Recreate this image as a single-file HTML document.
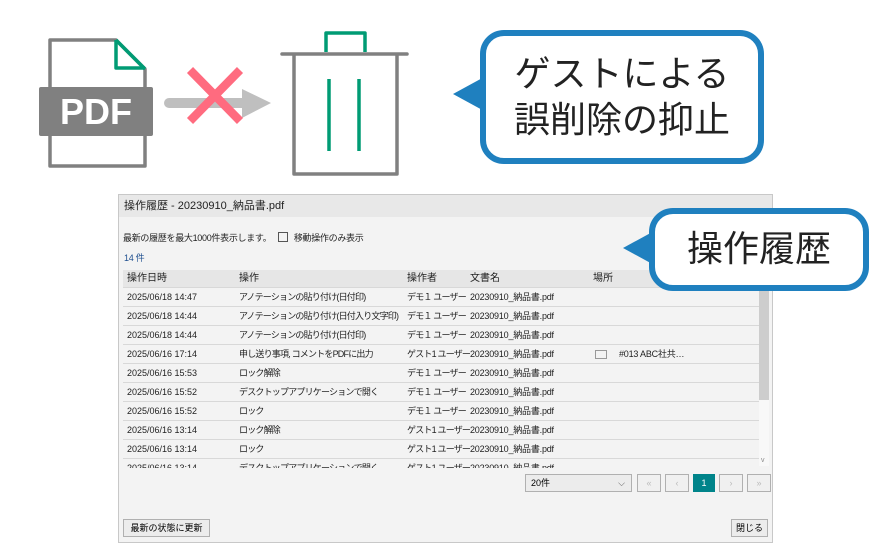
<!DOCTYPE html>
<html><head><meta charset="utf-8"><style>
body{margin:0;width:891px;height:560px;background:#fff;position:relative;overflow:hidden;font-family:"Liberation Sans","Noto Sans CJK JP",sans-serif}
.abs{position:absolute}
.dlg{left:118px;top:194px;width:655px;height:349px;border:1px solid #c8c8c8;background:#f3f3f3;box-sizing:border-box}
.tb{left:0;top:0;width:653px;height:22px;background:#e8e8e8;font-size:11px;color:#222;line-height:22px;padding-left:5px;box-sizing:border-box}
.s{font-size:9px;color:#222;letter-spacing:-0.3px}
.row{left:4px;width:636px;height:19px;border-bottom:1px solid #d8d8d8;font-size:9px;color:#222;line-height:19px;box-sizing:border-box;white-space:nowrap}
.row span{position:absolute}
.row .j{letter-spacing:-0.8px}
.row .f{letter-spacing:-0.2px}
.btn{border:1px solid #b0b0b0;background:#ececec;font-size:9px;line-height:16px;text-align:center;box-sizing:border-box;height:18px}
.callout{border:6px solid #1f80bf;border-radius:24px;background:#fff;box-sizing:border-box;color:#222;font-family:"Liberation Sans","Noto Sans CJK JP",sans-serif;font-weight:400;text-align:center}
</style></head><body>
<svg class="abs" style="left:0;top:0" width="460" height="190">
<path d="M50 40 H116 L145 69 V166 H50 Z" fill="none" stroke="#808080" stroke-width="3.5" stroke-linejoin="round"/>
<path d="M116 40 V68 H145" fill="none" stroke="#009b74" stroke-width="3.5" stroke-linejoin="round"/>
<path d="M116 40 L145 69" stroke="#009b74" stroke-width="3.5"/>
<rect x="39" y="87" width="114" height="49" rx="2" fill="#808080"/>
<text x="96" y="124" font-family="Liberation Sans" font-weight="bold" font-size="36" fill="#fff" text-anchor="middle">PDF</text>
<line x1="169" y1="103" x2="244" y2="103" stroke="#bfbfbf" stroke-width="10" stroke-linecap="round"/>
<path d="M242 89 L271 103 L242 118 Z" fill="#bfbfbf"/>
<path d="M190 70 L240 121 M240 70 L190 121" stroke="#ff6b7f" stroke-width="8.5"/>
<path d="M326 52 V33 H365 V52" fill="none" stroke="#009b74" stroke-width="3.5" stroke-linejoin="round"/>
<line x1="282" y1="54" x2="407" y2="54" stroke="#808080" stroke-width="3.5" stroke-linecap="round"/>
<path d="M294 54 V174 H397 V54" fill="none" stroke="#808080" stroke-width="3.5" stroke-linejoin="round"/>
<line x1="329" y1="79" x2="329" y2="151" stroke="#009b74" stroke-width="3.5"/>
<line x1="359" y1="79" x2="359" y2="151" stroke="#009b74" stroke-width="3.5"/>
</svg>

<div class="abs dlg">
<div class="abs tb">操作履歴 - 20230910_納品書.pdf</div>
<div class="abs s" style="left:4px;top:36px">最新の履歴を最大1000件表示します。 <span style="display:inline-block;width:8px;height:8px;border:1px solid #555;vertical-align:-1px;margin:0 4px"></span> 移動操作のみ表示</div>
<div class="abs s" style="left:5px;top:56px;color:#1f4f8f">14 件</div>
<div class="abs row" style="top:75px;height:18px;background:#e6e6e6;font-size:10px;line-height:18px"><span style="left:4px">操作日時</span><span style="left:116px">操作</span><span style="left:284px">操作者</span><span style="left:347px">文書名</span><span style="left:470px">場所</span></div>
<div class="abs" style="left:640px;top:93px;width:10px;height:178px;background:#f8f8f8"></div>
<div class="abs" style="left:640px;top:93px;width:10px;height:112px;background:#cdcdcd"></div>
<div class="abs s" style="left:642px;top:262px;color:#888;font-size:7px">v</div>
<div class="abs" style="left:4px;top:93px;width:636px;height:180px;overflow:hidden">
<div class="abs row" style="left:0;top:0"><span style="left:4px">2025/06/18 14:47</span><span class="j" style="left:116px">アノテーションの貼り付け(日付印)</span><span class="j" style="left:284px">デモ１ ユーザー</span><span class="f" style="left:347px">20230910_納品書.pdf</span></div>
<div class="abs row" style="left:0;top:19px"><span style="left:4px">2025/06/18 14:44</span><span class="j" style="left:116px">アノテーションの貼り付け(日付入り文字印)</span><span class="j" style="left:284px">デモ１ ユーザー</span><span class="f" style="left:347px">20230910_納品書.pdf</span></div>
<div class="abs row" style="left:0;top:38px"><span style="left:4px">2025/06/18 14:44</span><span class="j" style="left:116px">アノテーションの貼り付け(日付印)</span><span class="j" style="left:284px">デモ１ ユーザー</span><span class="f" style="left:347px">20230910_納品書.pdf</span></div>
<div class="abs row" style="left:0;top:57px"><span style="left:4px">2025/06/16 17:14</span><span class="j" style="left:116px">申し送り事項, コメントをPDFに出力</span><span class="j" style="left:284px">ゲスト1 ユーザー</span><span class="f" style="left:347px">20230910_納品書.pdf</span><span style="left:472px;top:5px;width:10px;height:7px;border:1px solid #999"></span><span class="f" style="left:496px">#013 ABC社共…</span></div>
<div class="abs row" style="left:0;top:76px"><span style="left:4px">2025/06/16 15:53</span><span class="j" style="left:116px">ロック解除</span><span class="j" style="left:284px">デモ１ ユーザー</span><span class="f" style="left:347px">20230910_納品書.pdf</span></div>
<div class="abs row" style="left:0;top:95px"><span style="left:4px">2025/06/16 15:52</span><span class="j" style="left:116px">デスクトップアプリケーションで開く</span><span class="j" style="left:284px">デモ１ ユーザー</span><span class="f" style="left:347px">20230910_納品書.pdf</span></div>
<div class="abs row" style="left:0;top:114px"><span style="left:4px">2025/06/16 15:52</span><span class="j" style="left:116px">ロック</span><span class="j" style="left:284px">デモ１ ユーザー</span><span class="f" style="left:347px">20230910_納品書.pdf</span></div>
<div class="abs row" style="left:0;top:133px"><span style="left:4px">2025/06/16 13:14</span><span class="j" style="left:116px">ロック解除</span><span class="j" style="left:284px">ゲスト1 ユーザー</span><span class="f" style="left:347px">20230910_納品書.pdf</span></div>
<div class="abs row" style="left:0;top:152px"><span style="left:4px">2025/06/16 13:14</span><span class="j" style="left:116px">ロック</span><span class="j" style="left:284px">ゲスト1 ユーザー</span><span class="f" style="left:347px">20230910_納品書.pdf</span></div>
<div class="abs row" style="left:0;top:171px"><span style="left:4px">2025/06/16 13:14</span><span class="j" style="left:116px">デスクトップアプリケーションで開く</span><span class="j" style="left:284px">ゲスト1 ユーザー</span><span class="f" style="left:347px">20230910_納品書.pdf</span></div>
</div>
<div class="abs btn" style="left:406px;top:279px;width:107px;text-align:left;padding-left:5px;background:#ececec">20件<span style="position:absolute;right:6px;color:#555">⌵</span></div>
<div class="abs btn" style="left:518px;top:279px;width:24px;color:#bbb;background:#f0f0f0">«</div>
<div class="abs btn" style="left:546px;top:279px;width:24px;color:#bbb;background:#f0f0f0">‹</div>
<div class="abs btn" style="left:574px;top:279px;width:22px;background:#00848a;border-color:#00848a;color:#fff">1</div>
<div class="abs btn" style="left:600px;top:279px;width:24px;color:#bbb;background:#f0f0f0">›</div>
<div class="abs btn" style="left:628px;top:279px;width:24px;color:#bbb;background:#f0f0f0">»</div>
<div class="abs btn" style="left:4px;top:324px;width:87px">最新の状態に更新</div>
<div class="abs btn" style="left:612px;top:324px;width:37px">閉じる</div>
</div>

<svg class="abs" style="left:450px;top:70px" width="40" height="50"><path d="M3 24 L36 6 V42 Z" fill="#1f80bf"/></svg>
<div class="abs callout" style="left:480px;top:30px;width:284px;height:134px;font-size:36px;line-height:46px;padding-top:15px">ゲストによる<br>誤削除の抑止</div>
<svg class="abs" style="left:620px;top:226px" width="40" height="46"><path d="M3 22 L36 4 V40 Z" fill="#1f80bf"/></svg>
<div class="abs callout" style="left:649px;top:208px;width:220px;height:83px;font-size:36px;line-height:70px">操作履歴</div>
</body></html>
